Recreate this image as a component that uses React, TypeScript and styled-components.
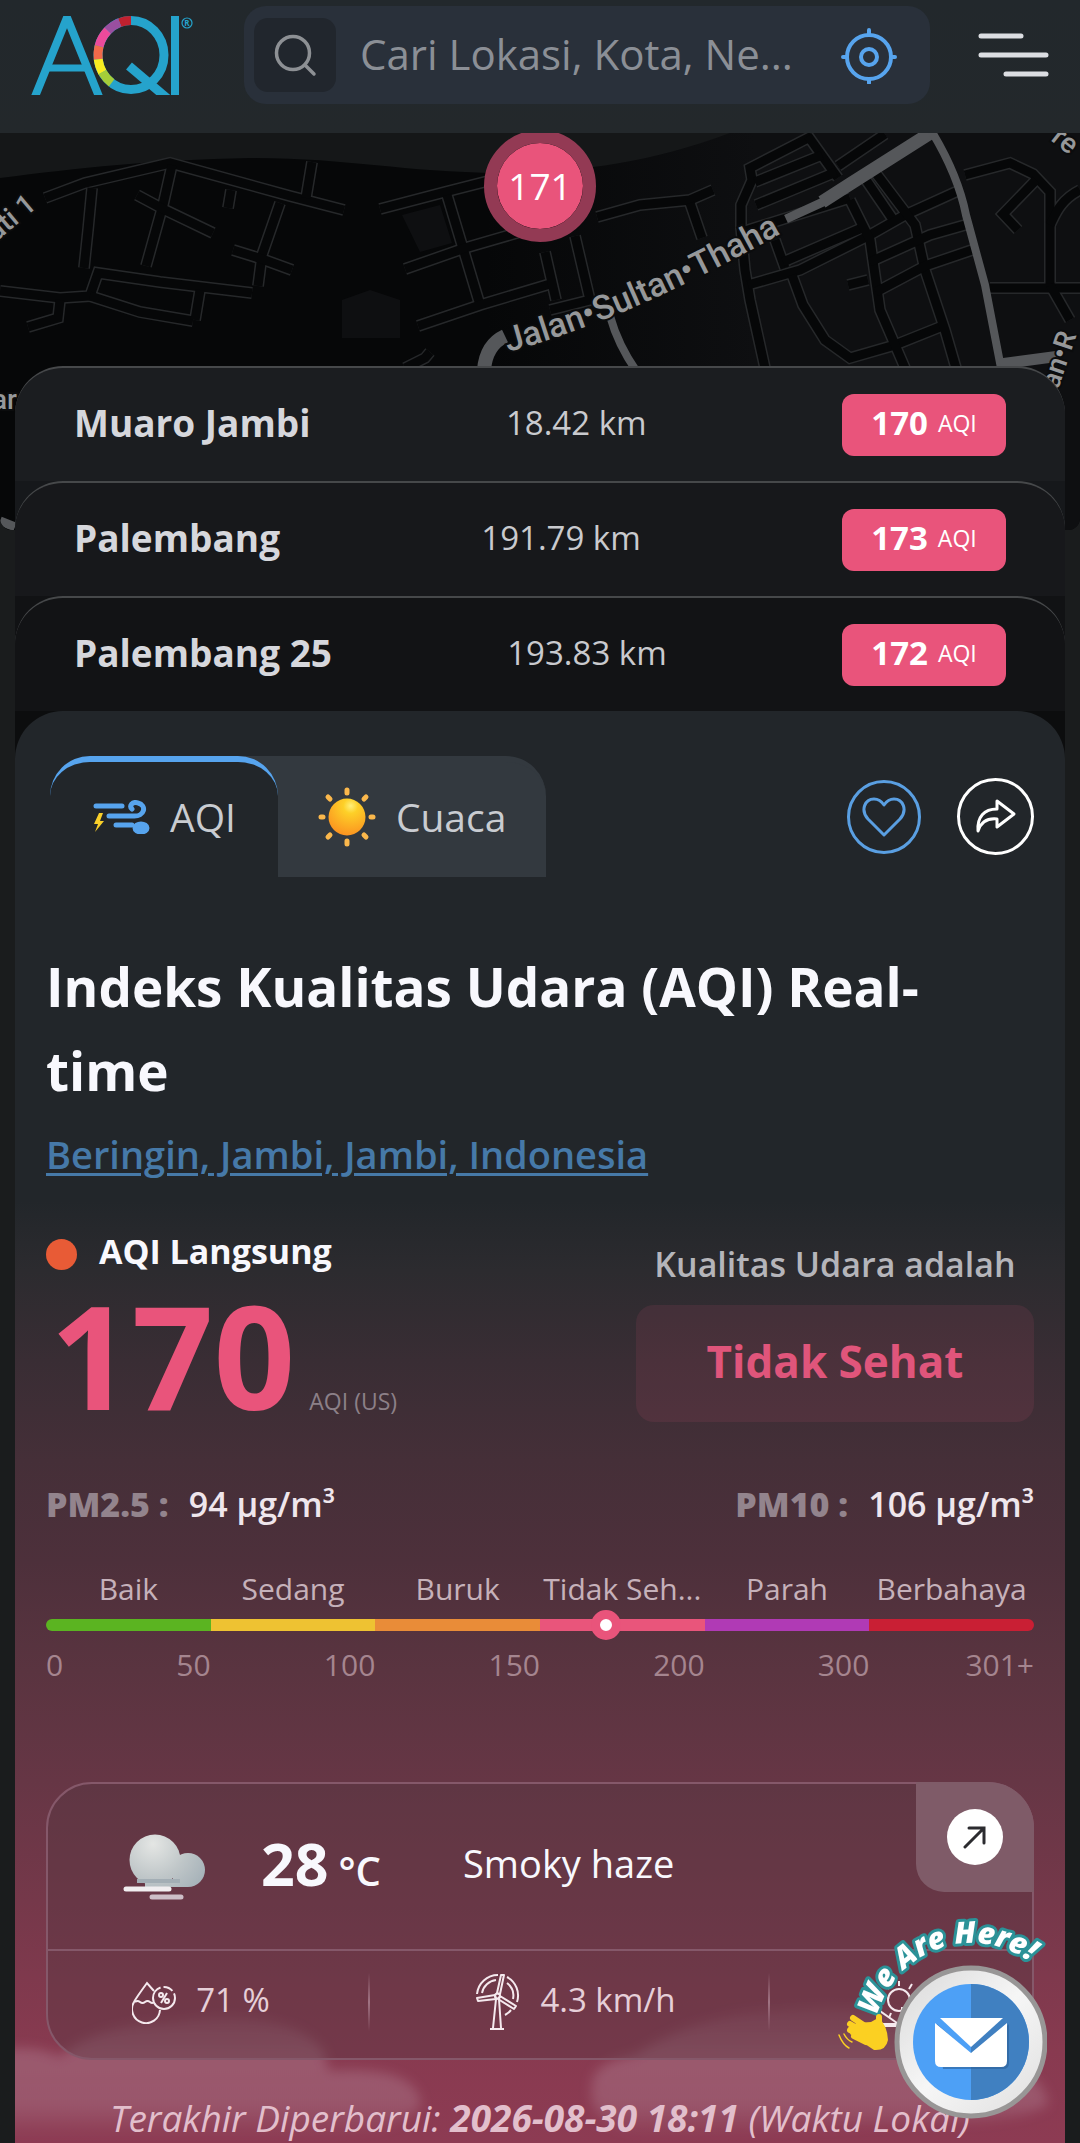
import React from "react";
import styled, { createGlobalStyle } from "styled-components";

const pink = "#e9547b";
const blue = "#57a4ee";
const panel = "#22262a";

const GlobalStyle = createGlobalStyle`
  *, *::before, *::after { box-sizing: border-box; }
  body {
    margin: 0;
    background: #1a1c1d;
    color: #f8f8fd;
    font-family: "Open Sans", "Noto Sans", sans-serif;
  }
  button, input { font: inherit; color: inherit; }
  button { border: 0; padding: 0; background: none; cursor: pointer; }
  ul, ol, p, h1, h2 { margin: 0; padding: 0; list-style: none; }
  svg { display: block; flex: none; }
`;

const Page = styled.div`
  min-height: 100vh;
  overflow: hidden;
`;

/* ---------- header ---------- */

const Header = styled.header`
  display: flex;
  align-items: center;
  padding: 6px 31px 29px;
  background: linear-gradient(#22282c, #23282b);
`;

const SearchForm = styled.form`
  flex: 1;
  min-width: 0;
  display: flex;
  align-items: center;
  height: 98px;
  margin: 0 48px 0 51px;
  padding: 0 31px 0 10px;
  border-radius: 22px;
  background: #29303a;
`;

const SearchButton = styled.button`
  display: flex;
  align-items: center;
  justify-content: center;
  width: 82px;
  height: 74px;
  border-radius: 14px;
  background: #21262d;
`;

const SearchInput = styled.input`
  flex: 1;
  min-width: 0;
  height: 60px;
  margin: 0 12px 0 24px;
  padding: 0 0 4px;
  border: 0;
  outline: 0;
  background: none;
  font-size: 42px;
  &::placeholder { color: #8b8f96; opacity: 1; }
`;

/* Coloured part of the ring, as degrees counter-clockwise from the top. */
const ring = [
  { from: 0, to: 20, color: "#c1212f" },
  { from: 20, to: 45, color: "#9a4fa0" },
  { from: 45, to: 75, color: "#ec4a9b" },
  { from: 75, to: 97, color: "#f2694a" },
  { from: 97, to: 120, color: "#f9ec20" },
  { from: 120, to: 144, color: "#a5cd39" },
];

const ringPoint = (deg: number) => {
  const a = (deg * Math.PI) / 180;
  return `${(100 - 33 * Math.sin(a)).toFixed(1)} ${(39 - 34.5 * Math.cos(a)).toFixed(1)}`;
};

const Logo = () => (
  <svg width="162" height="79" viewBox="0 0 162 79" role="img" aria-label="AQI">
    <g fill="none" stroke="#25a3cc" strokeWidth="8">
      <path d="M1 88 L35 4 H37 L71 88" strokeLinejoin="miter" />
      <path d="M15 52 H57" strokeWidth="7" />
      <path d="M144 0 V79" />
      <path d="M98 50 L137 83" strokeWidth="9" />
      <ellipse cx="100" cy="39" rx="33" ry="34.500" strokeWidth="9" />
      {ring.map((r) => (
        <path
          key={r.color}
          d={`M${ringPoint(r.from)} A33 34.500 0 0 0 ${ringPoint(r.to)}`}
          stroke={r.color}
          strokeWidth="9"
        />
      ))}
    </g>
    <circle cx="156" cy="7" r="5" fill="none" stroke="#25a3cc" strokeWidth="1.200" />
    <text x="156" y="10" fontSize="8" textAnchor="middle" fill="#25a3cc" fontWeight="700">R</text>
  </svg>
);

const SearchIcon = () => (
  <svg width="44" height="44" viewBox="0 0 44 44" fill="none" stroke="#8d9094" strokeWidth="3.500" strokeLinecap="round">
    <circle cx="20" cy="20" r="16.500" />
    <path d="M32 32 L41 41" />
  </svg>
);

const LocateIcon = () => (
  <svg width="58" height="58" viewBox="0 0 58 58" fill="none" stroke={blue} strokeWidth="4" strokeLinecap="round">
    <circle cx="28" cy="31" r="22" />
    <circle cx="28" cy="31" r="8" />
    <path d="M28 4 V9 M28 53 V57 M2 31 H6 M50 31 H54" />
  </svg>
);

const MenuIcon = () => (
  <svg width="71" height="48" viewBox="0 0 71 48" stroke="#dcdee2" strokeWidth="5" strokeLinecap="round">
    <path d="M3 5 H43 M3 24 H68 M28 43 H68" />
  </svg>
);

/* ---------- map ---------- */

const MapArea = styled.section`
  position: relative;
  height: 397px;
  border-radius: 0 0 12px 12px;
  overflow: hidden;
  background: #060708;
  & > svg { width: 100%; height: 100%; }
`;

const Marker = styled.button`
  position: absolute;
  top: -3px;
  left: 50%;
  width: 112px;
  height: 112px;
  margin-left: -56px;
  border: 13px solid #933a54;
  border-radius: 50%;
  background: ${pink};
  background-clip: padding-box;
  color: #fff;
  font-size: 37px;
  line-height: 80px;
`;

const streets = [
  "M45 198 L85 183 L170 163 L290 196 L344 210",
  "M92 188 L88 230 L84 268",
  "M172 165 L163 205 L146 266",
  "M137 195 L165 210 L213 233",
  "M231 190 L228 208",
  "M312 162 L306 198",
  "M280 203 L262 255 L258 286",
  "M233 250 L262 259 L292 270",
  "M0 291 L60 298 L90 296 L98 273 L160 282 L252 293",
  "M90 296 L140 312 L193 321",
  "M200 290 L195 320",
  "M60 300 L58 318 L28 327",
  "M380 209 L445 192 L500 178",
  "M447 195 L480 305",
  "M405 269 L465 248 L520 232",
  "M418 326 L480 305 L550 284",
  "M597 217 L640 205 L690 200 L713 190",
  "M690 203 L702 238",
  "M575 236 L590 300 L550 310",
  "M545 252 L556 300",
  "M765 368 L750 300 L745 270 L741 228 L741 205 L752 180 L750 168 L812 136",
  "M808 136 L838 178",
  "M755 182 L822 155",
  "M756 205 L836 172",
  "M742 232 L850 198",
  "M748 285 L800 270 L870 235 L905 215 L960 190",
  "M785 268 L775 240",
  "M783 262 L862 228",
  "M792 275 L803 305 L825 340 L850 358 L895 345 L945 325",
  "M850 200 L870 240 L880 310 L905 368",
  "M875 172 L915 225 L925 270 L945 330 L956 368",
  "M866 180 L892 218",
  "M870 262 L930 235 L965 225",
  "M876 292 L925 266 L972 250",
  "M848 285 L868 280",
  "M838 166 L885 134",
  "M965 175 L1010 163 L1033 174 L1050 192 L1050 285",
  "M1036 180 L1003 214 L1018 230",
  "M990 288 L1080 288",
  "M1080 190 C1060 200 1055 215 1050 225",
  "M1050 285 L1070 320",
  "M405 368 L425 358 L430 352",
];

const CityMap = () => (
  <svg viewBox="0 133 1080 397" preserveAspectRatio="xMidYMin slice" aria-hidden="true">
    <defs>
      <linearGradient id="land" x1="0" x2="1">
        <stop offset="0.450" stopColor="#060708" />
        <stop offset="0.700" stopColor="#0e0f11" />
      </linearGradient>
      <path id="thaha" d="M508 352 C600 327 690 285 800 223" />
      <path id="rightRoad" d="M1058 390 L1092 290" />
    </defs>
    <rect y="133" width="1080" height="397" fill="url(#land)" />
    <path d="M0 133 H730 C650 163 580 172 500 173 C400 172 350 158 250 158 C150 160 80 168 0 178 Z" fill="#151718" />
    <path d="M402 215 L440 205 L452 243 L420 252 Z M342 300 L370 290 L400 300 V338 H342 Z" fill="#0e0f11" />
    <g fill="none" stroke="#26282a" strokeWidth="12">
      {streets.map((d) => <path key={d} d={d} />)}
    </g>
    <g fill="none" stroke="#060708" strokeWidth="9">
      {streets.map((d) => <path key={d} d={d} />)}
    </g>
    <g fill="none" stroke="#55575a">
      <path d="M484 370 Q486 345 505 336" strokeWidth="14" />
      <path d="M610 316 Q618 345 637 372" strokeWidth="8" />
      <path d="M786 219 L825 201 L850 184" strokeWidth="9" />
      <path d="M822 202 L850 184 L932 132" strokeWidth="13" />
      <path d="M932 132 Q958 175 966 215 L985 285 L1001 368" strokeWidth="8" />
      <path d="M1000 364 L1060 356" strokeWidth="11" />
      <path d="M0 521 L15 527" strokeWidth="9" />
    </g>
    <g fill="#96989a" stroke="#0b0c0d" strokeWidth="4" paintOrder="stroke" fontFamily="Roboto, sans-serif" fontWeight="500" fontSize="28">
      <text fontSize="34"><textPath href="#thaha">Jalan•Sultan•Thaha</textPath></text>
      <text transform="translate(-4 242) rotate(-40)">ati 1</text>
      <text transform="translate(-8 409)">ar</text>
      <text><textPath href="#rightRoad">an•R</textPath></text>
      <text transform="translate(1050 140) rotate(38)">re</text>
    </g>
  </svg>
);

/* ---------- nearby places ---------- */

const Content = styled.main`
  position: relative;
  margin-top: -164px;
  padding: 0 15px;
`;

const NearbyRow = styled.li<{ $shade: string; $under: string }>`
  background: ${(p) => p.$under};
  & > a {
    display: flex;
    align-items: center;
    justify-content: space-between;
    height: 115px;
    padding: 0 59px;
    border-top: 2px solid #46484a;
    border-radius: 48px 48px 0 0;
    background: ${(p) => p.$shade};
    color: #d6d7dc;
    text-decoration: none;
  }
`;

const PlaceName = styled.span`
  padding-bottom: 5px;
  font-size: 37px;
  font-weight: 700;
`;

const Distance = styled.span`
  padding-bottom: 5px;
  font-size: 33px;
  color: #c9cace;
`;

const Badge = styled.span`
  display: flex;
  align-items: center;
  justify-content: center;
  gap: 10px;
  width: 164px;
  height: 62px;
  padding-bottom: 4px;
  border-radius: 12px;
  background: ${pink};
  color: #fff;
  font-size: 23px;
  & > b { font-size: 33px; }
`;

/* ---------- main panel ---------- */

const PanelWrap = styled.div`
  background: #0c0d0e;
`;

const Panel = styled.section`
  position: relative;
  padding: 45px 31px 3px;
  border-radius: 48px 48px 0 0;
  background: linear-gradient(
    ${panel} 0, ${panel} 490px, #2c2b2f 560px, #392d34 650px, #452f38 750px,
    #4d303b 850px, #5a3440 960px, #663645 1070px, #75384a 1190px, #883a50 1340px, #8d3b53 1432px
  );
`;

const Clouds = styled.svg`
  position: absolute;
  left: 0;
  bottom: 0;
  width: 100%;
  height: 220px;
`;

const TopBar = styled.div`
  position: relative;
  display: flex;
  align-items: center;
  justify-content: space-between;
  padding-left: 4px;
`;

const Tabs = styled.div`
  display: flex;
`;

const Tab = styled.button<{ $active?: boolean }>`
  position: relative;
  z-index: ${(p) => (p.$active ? 1 : 0)};
  display: flex;
  align-items: center;
  gap: 20px;
  height: 121px;
  margin-left: ${(p) => (p.$active ? 0 : -40)}px;
  padding: ${(p) => (p.$active ? "0 42px 6px 42px" : "0 40px 6px 80px")};
  border-top: 6px solid ${(p) => (p.$active ? blue : "#33393f")};
  border-radius: ${(p) => (p.$active ? "40px 40px 0 0" : "0 40px 0 0")};
  background: ${(p) => (p.$active ? panel : "#33393f")};
  color: #c9ccd1;
  font-size: 39px;
`;

const Actions = styled.div`
  display: flex;
  align-items: center;
  gap: 36px;
`;

const RoundButton = styled.button<{ $size: number; $color: string }>`
  display: flex;
  align-items: center;
  justify-content: center;
  width: ${(p) => p.$size}px;
  height: ${(p) => p.$size}px;
  border: 3px solid ${(p) => p.$color};
  border-radius: 50%;
  color: ${(p) => p.$color};
`;

const Title = styled.h1`
  margin-top: 68px;
  font-size: 53px;
  font-weight: 700;
  line-height: 84px;
`;

const PlaceLink = styled.a`
  display: block;
  width: fit-content;
  margin-top: 15px;
  color: #4679a8;
  font-size: 38px;
  font-weight: 600;
  line-height: 52px;
  text-decoration: underline;
  text-decoration-thickness: 3px;
  text-underline-offset: 4px;
`;

const Summary = styled.div`
  position: relative;
  display: flex;
  justify-content: space-between;
  margin-top: 47px;
`;

const LiveLabel = styled.h2`
  display: flex;
  align-items: center;
  gap: 22px;
  margin-bottom: 12px;
  font-size: 34px;
  font-weight: 700;
  line-height: 48px;
  &::before {
    content: "";
    width: 31px;
    height: 31px;
    margin-top: 6px;
    border-radius: 50%;
    background: #e85b36;
  }
`;

const LiveValue = styled.p`
  display: flex;
  align-items: baseline;
  gap: 14px;
  padding-left: 4px;
  color: #8c8088;
  font-size: 23px;
  line-height: 24px;
  & > strong {
    color: ${pink};
    font-size: 143px;
    font-weight: 700;
    line-height: 136px;
  }
`;

const Quality = styled.div`
  width: 398px;
  padding-top: 13px;
  color: #b5b5ba;
  font-size: 34px;
  font-weight: 600;
  line-height: 48px;
  text-align: center;
`;

const QualityBox = styled.p`
  height: 117px;
  margin-top: 17px;
  border-radius: 18px;
  background: rgba(233, 84, 123, 0.1);
  color: #e0557b;
  font-size: 44px;
  font-weight: 700;
  line-height: 112px;
`;

const Pollutants = styled.div`
  position: relative;
  display: flex;
  justify-content: space-between;
  margin-top: 57px;
  color: #efe6ec;
  font-size: 34px;
  font-weight: 600;
  line-height: 48px;
  & b { margin-right: 20px; color: #93848d; font-weight: 800; }
`;

const Scale = styled.div`
  position: relative;
  margin-top: 41px;
`;

const ScaleRow = styled.ol<{ $values?: boolean }>`
  display: grid;
  grid-template-columns: repeat(6, 1fr);
  color: ${(p) => (p.$values ? "#a5858f" : "#c6b1ba")};
  font-size: 30px;
  font-weight: ${(p) => (p.$values ? 400 : 500)};
  line-height: 40px;
  white-space: nowrap;
  & > li { display: flex; justify-content: ${(p) => (p.$values ? "flex-end" : "center")}; }
  & > li > span:first-child:not(:last-child) { margin-right: auto; }
`;

const ScaleBar = styled.div`
  position: relative;
  display: flex;
  height: 12px;
  margin: 10px 0 14px;
`;

const Segment = styled.span<{ $color: string }>`
  flex: 1;
  background: ${(p) => p.$color};
  &:first-child { border-radius: 6px 0 0 6px; }
  &:nth-last-child(2) { border-radius: 0 6px 6px 0; }
`;

const Pointer = styled.i`
  position: absolute;
  top: -9px;
  width: 30px;
  height: 30px;
  margin-left: -15px;
  border: 9px solid ${pink};
  border-radius: 50%;
  background: #fff;
`;

/* ---------- weather ---------- */

const Weather = styled.section`
  position: relative;
  margin-top: 97px;
  border: 2px solid #85586a;
  border-radius: 46px;
  background: rgba(84, 54, 66, 0.4);
`;

const WeatherNow = styled.div`
  display: flex;
  align-items: center;
  height: 165px;
  padding-left: 75px;
`;

const Temperature = styled.p`
  width: 202px;
  margin-left: 54px;
  padding-bottom: 8px;
  font-size: 40px;
  font-weight: 600;
  & > strong { margin-right: 10px; font-size: 59px; font-weight: 700; }
`;

const Condition = styled.p`
  padding-bottom: 8px;
  font-size: 38px;
  font-weight: 500;
`;

const OpenButton = styled.button`
  position: absolute;
  top: -2px;
  right: -2px;
  display: flex;
  align-items: center;
  justify-content: center;
  width: 118px;
  height: 110px;
  border-radius: 0 46px 0 28px;
  background: #7f5b68;
  & > span {
    display: flex;
    align-items: center;
    justify-content: center;
    width: 56px;
    height: 56px;
    border-radius: 50%;
    background: #fff;
  }
`;

const WeatherFacts = styled.ul`
  display: grid;
  grid-template-columns: 322fr 400fr 262fr;
  height: 109px;
  border-top: 2px solid #85586a;
`;

const Fact = styled.li`
  position: relative;
  display: flex;
  align-items: center;
  justify-content: center;
  gap: 20px;
  padding: 0 0 6px 12px;
  color: #e6cfd8;
  font-size: 33px;
  font-weight: 500;
  & > span { padding-bottom: 4px; }
  &:first-child { padding: 0 16px 6px 0; }
  &:not(:last-child)::after {
    content: "";
    position: absolute;
    right: 0;
    width: 2px;
    height: 58px;
    background: linear-gradient(transparent, #a07484, transparent);
  }
`;

const Updated = styled.p`
  position: relative;
  margin-top: 34px;
  color: #e2bfcc;
  font-size: 37px;
  font-style: italic;
  line-height: 48px;
  text-align: center;
`;

/* ---------- contact button ---------- */

const Contact = styled.button`
  position: fixed;
  right: 33px;
  bottom: 23px;
  width: 214px;
  height: 206px;
`;

const WindIcon = () => (
  <svg width="58" height="34" viewBox="0 0 58 34" fill="none" stroke={blue} strokeWidth="5" strokeLinecap="round" strokeLinejoin="round">
    <path d="M4 6 H30" />
    <path d="M17 16 H41 C53 17 55 5 46 3 C40 1 37 6 40 9" />
    <path d="M24 25 H40" />
    <ellipse cx="49" cy="28" rx="6" ry="4" fill={blue} />
    <path d="M7 13 L2 24 H6 L3 32 L12 21 H8 L11 13 Z" fill="#f9cf2a" stroke="none" />
  </svg>
);

const SunIcon = () => (
  <svg width="58" height="60" viewBox="0 0 58 60">
    <defs>
      <radialGradient id="sun" cx="0.600" cy="0.200" r="0.800">
        <stop offset="0" stopColor="#fff07a" />
        <stop offset="0.250" stopColor="#fdd028" />
        <stop offset="1" stopColor="#fb9420" />
      </radialGradient>
    </defs>
    <circle cx="29" cy="30" r="18.500" fill="url(#sun)" />
    <g stroke="#fbb84c" strokeWidth="5" strokeLinecap="round">
      <path d="M29 3 V6 M29 54 V57 M3 30 H5 M53 30 H55 M10 10 L12 12 M46 48 L48 50 M10 50 L12 48 M46 12 L48 10" />
    </g>
  </svg>
);

const HeartIcon = () => (
  <svg width="44" height="40" viewBox="0 0 44 40" fill="none" stroke="currentColor" strokeWidth="3" strokeLinejoin="round">
    <path d="M22 38 L6 22 C-2 13 3 2 12 2 C17 2 20 5 22 8 C24 5 27 2 32 2 C41 2 46 13 38 22 Z" />
  </svg>
);

const ShareIcon = () => (
  <svg width="42" height="38" viewBox="0 0 42 38" fill="none" stroke="currentColor" strokeWidth="3" strokeLinejoin="round">
    <path d="M22 3 L39 16 L22 29 V21 C12 20 6 24 3 33 C2 19 9 11 22 11 Z" />
  </svg>
);

const HazeIcon = () => (
  <svg width="84" height="66" viewBox="0 0 84 66">
    <defs>
      <radialGradient id="puff" gradientUnits="userSpaceOnUse" cx="30" cy="10" r="62">
        <stop offset="0" stopColor="#e4e6e4" />
        <stop offset="0.550" stopColor="#bfc6c8" />
        <stop offset="1" stopColor="#a5b1b8" />
      </radialGradient>
    </defs>
    <g fill="url(#puff)">
      <circle cx="32" cy="26" r="25.500" />
      <circle cx="65" cy="36" r="17" />
      <path d="M22 49 H65 V53 H22 Z M50 24 H60 V50 H50 Z" />
    </g>
    <path d="M14 47 H57" stroke="#a3aeb5" strokeWidth="4" />
    <path d="M3 55 H46" stroke="#f1eef0" strokeWidth="5" strokeLinecap="round" />
    <path d="M29 63 H58" stroke="#cdbec7" strokeWidth="5" strokeLinecap="round" />
  </svg>
);

const HumidityIcon = () => (
  <svg width="44" height="44" viewBox="0 0 44 44" fill="none" stroke="#f5e9ee" strokeWidth="2">
    <path d="M28 30 A14 14 0 1 1 2 22 Q4 18 15 3 L22 11" />
    <path d="M3 22 q2.500 -2 5 0 t5 0 t5 0 t4 0" />
    <circle cx="32" cy="18" r="11" strokeDasharray="48 3 10 3" />
    <path d="M29 23 L35 13" />
    <circle cx="29" cy="15" r="2" />
    <circle cx="35" cy="21" r="2" />
  </svg>
);

const WindmillIcon = () => (
  <svg width="44" height="58" viewBox="0 0 44 58" fill="none" stroke="#f5e9ee" strokeWidth="2" strokeLinejoin="round">
    <path d="M20 26 L17 55 M23 26 L25 55 M14 56 H28" />
    <circle cx="21.500" cy="23" r="2.500" />
    <path d="M21 20 L25 2 L28 2 L24 21 Z M19 22 L1 25 L2 28 L20 26 Z M24 23 L40 33 L38 36 L22 26 Z" />
    <path d="M22 2 A21 21 0 0 0 1 21 M20 7 A16 16 0 0 0 6 20 M31 4 A21 21 0 0 1 41 29 M31 10 A16 16 0 0 1 37 26 M35 37 A20 20 0 0 1 29 42" />
  </svg>
);

const UvIcon = () => (
  <svg width="52" height="52" viewBox="0 0 52 52" fill="none" stroke="#f5e9ee" strokeWidth="2">
    <circle cx="18" cy="24" r="11" />
    <path d="M18 5 V10 M5 8 L8 13 M31 8 L28 13 M36 17 L32 19 M10 37 L8 42 M21 31 V44" />
    <path d="M-4 33 L16 47" />
    <path d="M2 49 H34" strokeWidth="4" />
  </svg>
);

const ContactArt = () => (
  <svg width="214" height="206" viewBox="833 1914 214 206">
    <defs>
      <path id="arc" d="M877 2016 A98 98 0 0 1 1066 2014" />
      <linearGradient id="rim" x1="0" y1="0" x2="1" y2="1">
        <stop offset="0" stopColor="#d8d8d8" />
        <stop offset="0.500" stopColor="#f6f6f6" />
        <stop offset="1" stopColor="#dedede" />
      </linearGradient>
    </defs>
    <circle cx="971" cy="2042" r="74" fill="url(#rim)" stroke="#989696" strokeWidth="5" />
    <circle cx="971" cy="2042" r="58" fill="#4da0f6" />
    <path d="M971 1984 A58 58 0 0 1 971 2100 Z" fill="#4080c1" />
    <path d="M937 2024 L973 2056 L1009 2024 V2063 Q1009 2069 1003 2069 H943 Z" fill="#2c5f98" opacity="0.600" />
    <path d="M940 2018 H1003 L971 2047 Z" fill="#fff" />
    <path d="M935 2023 L971 2053 L1007 2023 V2061 Q1007 2067 1001 2067 H941 Q935 2067 935 2061 Z" fill="#fff" />
    <text fontSize="30" fontStyle="italic" fontWeight="800" fill="#fff" stroke="#2b9298" strokeWidth="6" strokeLinejoin="round" paintOrder="stroke">
      <textPath href="#arc">We Are Here!</textPath>
    </text>
    <g fill="#fbd022" stroke="#fbd022" strokeLinecap="round">
      <path d="M850 2034 L856 2023 L871 2022 L878 2018 Q887 2024 888 2040 Q886 2051 874 2050 Z" stroke="none" />
      <path d="M868 2028 L853 2018 M864 2032 L850 2024 M864 2037 L850 2030 M866 2042 L854 2036 M879 2028 L879 2017" strokeWidth="6" />
      <path d="M839 2035 Q843 2045 849 2048 M844 2034 Q847 2040 852 2042" fill="none" strokeWidth="1.500" />
    </g>
  </svg>
);

const nearby = [
  { name: "Muaro Jambi", distance: "18.42 km", aqi: 170, shade: "#1b1d20", under: "transparent" },
  { name: "Palembang", distance: "191.79 km", aqi: 173, shade: "#17181b", under: "#16181b" },
  { name: "Palembang 25", distance: "193.83 km", aqi: 172, shade: "#121315", under: "#111214" },
];

const levels = [
  { name: "Baik", to: "50", color: "#5bb421" },
  { name: "Sedang", to: "100", color: "#eec232" },
  { name: "Buruk", to: "150", color: "#e98c38" },
  { name: "Tidak Seh...", to: "200", color: "#e9557b" },
  { name: "Parah", to: "300", color: "#b03ab5" },
  { name: "Berbahaya", to: "301+", color: "#c91f34" },
];

const aqi = 170;
const pointerLeft = ((3 + (aqi - 150) / 50) / levels.length) * 100;

export default function App() {
  return (
    <Page>
      <GlobalStyle />
      <Header>
        <Logo />
        <SearchForm role="search" onSubmit={(e) => e.preventDefault()}>
          <SearchButton type="submit" aria-label="Cari"><SearchIcon /></SearchButton>
          <SearchInput type="text" aria-label="Cari lokasi" placeholder="Cari Lokasi, Kota, Ne..." />
          <button type="button" aria-label="Lokasi saya"><LocateIcon /></button>
        </SearchForm>
        <button type="button" aria-label="Menu"><MenuIcon /></button>
      </Header>

      <MapArea>
        <CityMap />
        <Marker type="button">171</Marker>
      </MapArea>

      <Content>
        <ul>
          {nearby.map((n) => (
            <NearbyRow key={n.name} $shade={n.shade} $under={n.under}>
              <a href="#">
                <PlaceName>{n.name}</PlaceName>
                <Distance>{n.distance}</Distance>
                <Badge><b>{n.aqi}</b>AQI</Badge>
              </a>
            </NearbyRow>
          ))}
        </ul>

        <PanelWrap>
          <Panel>
            <Clouds viewBox="0 0 1050 220" preserveAspectRatio="none" aria-hidden="true">
              <defs>
                <filter id="soft" x="-10%" y="-20%" width="120%" height="140%">
                  <feGaussianBlur stdDeviation="6" />
                </filter>
                <linearGradient id="fade" gradientUnits="userSpaceOnUse" x1="0" y1="80" x2="0" y2="212">
                  <stop offset="0" stopColor="#b07f92" stopOpacity="0.150" />
                  <stop offset="0.400" stopColor="#b07f92" stopOpacity="0.450" />
                  <stop offset="0.750" stopColor="#b07f92" stopOpacity="0.400" />
                  <stop offset="1" stopColor="#b07f92" stopOpacity="0" />
                </linearGradient>
              </defs>
              <g fill="url(#fade)" filter="url(#soft)">
                <path d="M-20 125 Q20 118 45 132 Q80 100 150 98 Q270 80 308 125 L314 146 Q400 140 406 178 Q400 205 300 212 H-20 Z" />
                <path d="M577 160 Q577 138 620 130 Q680 90 760 85 Q900 70 950 130 Q1030 140 1033 180 Q1000 200 900 198 L640 212 Q570 205 577 160 Z" />
              </g>
            </Clouds>

            <TopBar>
              <Tabs role="tablist">
                <Tab type="button" role="tab" aria-selected="true" $active><WindIcon />AQI</Tab>
                <Tab type="button" role="tab" aria-selected="false"><SunIcon />Cuaca</Tab>
              </Tabs>
              <Actions>
                <RoundButton type="button" aria-label="Favorit" $size={74} $color="#5a9fe2"><HeartIcon /></RoundButton>
                <RoundButton type="button" aria-label="Bagikan" $size={77} $color="#fff"><ShareIcon /></RoundButton>
              </Actions>
            </TopBar>

            <Title>Indeks Kualitas Udara (AQI) Real-time</Title>
            <PlaceLink href="#">Beringin, Jambi, Jambi, Indonesia</PlaceLink>

            <Summary>
              <div>
                <LiveLabel>AQI Langsung</LiveLabel>
                <LiveValue><strong>{aqi}</strong>AQI (US)</LiveValue>
              </div>
              <Quality>
                <p>Kualitas Udara adalah</p>
                <QualityBox>Tidak Sehat</QualityBox>
              </Quality>
            </Summary>

            <Pollutants>
              <p><b>PM2.5 :</b>94 μg/m³</p>
              <p><b>PM10 :</b>106 μg/m³</p>
            </Pollutants>

            <Scale>
              <ScaleRow>
                {levels.map((l) => <li key={l.name}>{l.name}</li>)}
              </ScaleRow>
              <ScaleBar>
                {levels.map((l) => <Segment key={l.name} $color={l.color} />)}
                <Pointer style={{ left: `${pointerLeft}%` }} />
              </ScaleBar>
              <ScaleRow $values>
                {levels.map((l, i) => (
                  <li key={l.to}>{i === 0 && <span>0</span>}<span>{l.to}</span></li>
                ))}
              </ScaleRow>
            </Scale>

            <Weather>
              <WeatherNow>
                <HazeIcon />
                <Temperature><strong>28</strong>°C</Temperature>
                <Condition>Smoky haze</Condition>
              </WeatherNow>
              <OpenButton type="button" aria-label="Buka cuaca">
                <span>
                  <svg width="24" height="24" viewBox="0 0 24 24" fill="none" stroke="#2b2b2f" strokeWidth="3">
                    <path d="M2 22 L21 3 M6 3 H21 V18" strokeLinecap="round" />
                  </svg>
                </span>
              </OpenButton>
              <WeatherFacts>
                <Fact><HumidityIcon /><span>71 %</span></Fact>
                <Fact><WindmillIcon /><span>4.3 km/h</span></Fact>
                <Fact><UvIcon /></Fact>
              </WeatherFacts>
            </Weather>

            <Updated>Terakhir Diperbarui: <b>2026-08-30 18:11</b> (Waktu Lokal)</Updated>
          </Panel>
        </PanelWrap>
      </Content>

      <Contact type="button" aria-label="Hubungi kami"><ContactArt /></Contact>
    </Page>
  );
}
